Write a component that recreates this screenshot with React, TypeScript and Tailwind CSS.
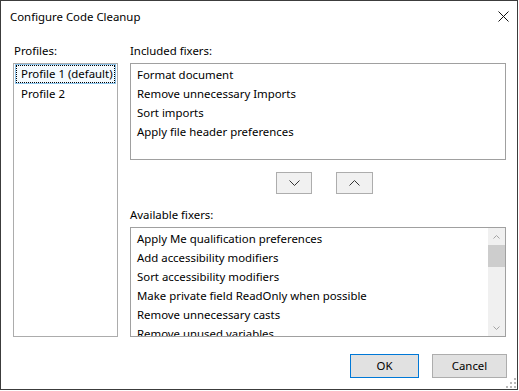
import React from "react";

const included = [
  "Format document",
  "Remove unnecessary Imports",
  "Sort imports",
  "Apply file header preferences",
];

const available = [
  "Apply Me qualification preferences",
  "Add accessibility modifiers",
  "Sort accessibility modifiers",
  "Make private field ReadOnly when possible",
  "Remove unnecessary casts",
  "Remove unused variables",
];

function Chevron({ dir, className }: { dir: "up" | "down"; className?: string }) {
  return (
    <svg width="11" height="6" viewBox="0 0 11 6" className={className}>
      {dir === "down" ? (
        <polyline points="0.5,0.5 5.5,5.5 10.5,0.5" fill="none" stroke="currentColor" strokeWidth="1" />
      ) : (
        <polyline points="0.5,5.5 5.5,0.5 10.5,5.5" fill="none" stroke="currentColor" strokeWidth="1" />
      )}
    </svg>
  );
}

function SizeGrip() {
  const dots = [
    [8, 0],
    [4, 4],
    [8, 4],
    [0, 8],
    [4, 8],
    [8, 8],
  ];
  return (
    <svg width="10" height="10" viewBox="0 0 10 10" className="absolute right-[1px] bottom-[1px]">
      {dots.map(([x, y], i) => (
        <rect key={i} x={x} y={y} width="2" height="2" fill="#b8b8b8" />
      ))}
    </svg>
  );
}

export default function App() {
  return (
    <div className="w-[519px] h-[391px] bg-white">
      <div className="relative w-[518px] h-[390px] border border-[#3c3c3c] bg-white text-black font-['Noto_Sans','Open_Sans',sans-serif] text-[11.4px] leading-none">
        {/* Title bar */}
        <div className="h-[31px] flex items-center justify-between pl-[9px] pr-[7px]">
          <span className="text-[11.4px]">Configure Code Cleanup</span>
          <svg width="11" height="11" viewBox="0 0 11 11" className="mr-[1px]">
            <path d="M0.5 0.5 L10.5 10.5 M10.5 0.5 L0.5 10.5" stroke="#111" strokeWidth="1" />
          </svg>
        </div>

        {/* Body */}
        <div className="flex pt-[11px] pl-[12px] gap-[12px]">
          {/* Profiles */}
          <div className="w-[105px] flex flex-col">
            <div className="h-[16px] flex items-center mb-[4px] pl-[1px]">Profiles:</div>
            <div className="h-[274px] border border-[#acacac] bg-white px-[1px]">
              <div className="h-[20px] border border-[#8ec6ee] bg-[#f4fafe]">
                <div className="h-full border border-dotted border-black flex items-center pl-[4px] whitespace-nowrap">
                  Profile 1 (default)
                </div>
              </div>
              <div className="h-[20px] flex items-center pl-[6px] whitespace-nowrap">Profile 2</div>
            </div>
          </div>

          {/* Fixers */}
          <div className="w-[376px] flex flex-col">
            <div className="h-[16px] flex items-center mb-[4px]">Included fixers:</div>
            <div className="h-[97px] border border-[#a0a0a0] bg-white pt-[1px] pl-[6px]">
              {included.map((t) => (
                <div key={t} className="h-[19px] flex items-center whitespace-nowrap">
                  {t}
                </div>
              ))}
            </div>

            <div className="flex justify-center gap-[24px] mt-[12px] pl-[13px]">
              <button className="w-[36px] h-[22px] border border-[#adadad] bg-[#f1f1f1] flex items-center justify-center text-[#333]">
                <Chevron dir="down" />
              </button>
              <button className="w-[37px] h-[22px] border border-[#adadad] bg-[#f1f1f1] flex items-center justify-center text-[#333]">
                <Chevron dir="up" />
              </button>
            </div>

            <div className="h-[16px] flex items-center mt-[13px] mb-[4px]">Available fixers:</div>
            <div className="h-[110px] border border-[#a0a0a0] bg-white flex overflow-hidden">
              <div className="flex-1 pt-[1px] pl-[6px] overflow-hidden">
                {available.map((t) => (
                  <div key={t} className="h-[19px] flex items-center whitespace-nowrap">
                    {t}
                  </div>
                ))}
              </div>
              <div className="w-[17px] h-full bg-[#f0f0f0] flex flex-col items-center text-[#a3a3a3]">
                <div className="h-[17px] flex items-center justify-center">
                  <svg width="7" height="4" viewBox="0 0 7 4">
                    <polyline points="0.5,3.5 3.5,0.5 6.5,3.5" fill="none" stroke="currentColor" strokeWidth="1" />
                  </svg>
                </div>
                <div className="w-full h-[22px] bg-[#cdcdcd]" />
                <div className="flex-1" />
                <div className="h-[17px] flex items-center justify-center">
                  <svg width="7" height="4" viewBox="0 0 7 4">
                    <polyline points="0.5,0.5 3.5,3.5 6.5,0.5" fill="none" stroke="currentColor" strokeWidth="1" />
                  </svg>
                </div>
              </div>
            </div>
          </div>
        </div>

        {/* Footer */}
        <div className="flex justify-end gap-[13px] mt-[17px] pr-[10px]">
          <button className="w-[69px] h-[24px] border border-[#0078d7] bg-[#e1e1e1] flex items-center justify-center">
            OK
          </button>
          <button className="w-[75px] h-[24px] border border-[#adadad] bg-[#e1e1e1] flex items-center justify-center">
            Cancel
          </button>
        </div>

        <SizeGrip />
      </div>
    </div>
  );
}
